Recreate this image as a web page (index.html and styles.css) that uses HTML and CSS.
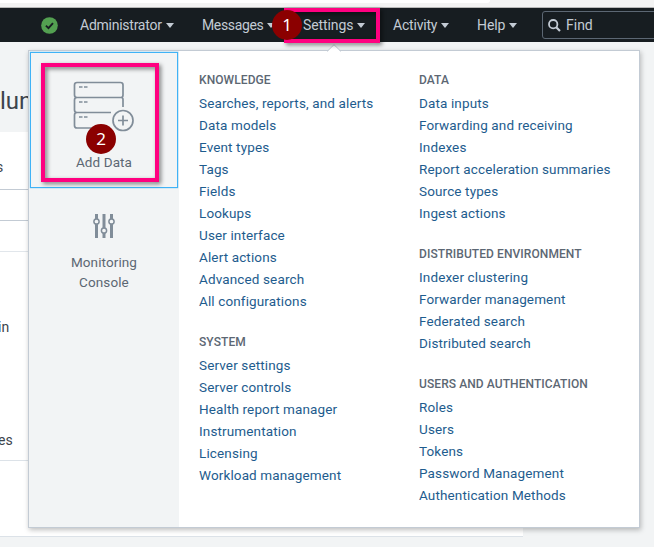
FILE: index.html
```
<!DOCTYPE html>
<html lang="en">
<head>
<meta charset="utf-8">
<title>Settings</title>
<link rel="stylesheet" href="styles.css">
</head>
<body>
<div class="browser-strip"><div class="browser-tab"></div></div>
<nav class="topbar">
  <svg class="health" viewBox="0 0 18 18"><circle cx="9" cy="9" r="8.8" fill="#53a051"/><path d="M5.2 9.2l2.7 2.6 4.8-5.3" fill="none" stroke="#171d21" stroke-width="2"/></svg>
  <a class="nav nav-admin"><span>Administrator</span><i class="caret"></i></a>
  <a class="nav nav-messages"><span>Messages</span><i class="caret"></i></a>
  <a class="nav nav-settings"><span>Settings</span><i class="caret"></i></a>
  <a class="nav nav-activity"><span>Activity</span><i class="caret"></i></a>
  <a class="nav nav-help"><span>Help</span><i class="caret"></i></a>
  <div class="find">
    <svg class="find-icon" viewBox="0 0 13 13"><circle cx="5.2" cy="5.2" r="4.2" fill="none" stroke="#c3cbd4" stroke-width="1.8"/><path d="M8.2 8.2L12 12" stroke="#c3cbd4" stroke-width="2.2"/></svg>
    <span>Find</span>
  </div>
</nav>
<main class="page">
  <h1 class="page-title">lun</h1>
  <section class="content">
    <div class="row row-label">s</div>
    <div class="row row-field"></div>
    <div class="row row-blank"></div>
    <div class="row row-list"><span>in</span><span>es</span></div>
  </section>
</main>

<div class="menu">
  <svg class="notch" viewBox="0 0 14 8"><path d="M0 8L7 1l7 7z" fill="#fff"/><path d="M0 7.5L7 .7l7 6.8" fill="none" stroke="#c3cbd4" stroke-width="1"/></svg>
  <aside class="side">
    <a class="tile tile-active">
      <svg class="add-icon" viewBox="0 0 62 52" fill="none" stroke="#818d99" stroke-width="1.7">
        <path d="M50 26V18.500Q50 16.500 48 16.500Q50 16.500 50 14V4Q50 1.500 47.500 1.500H4Q1.500 1.500 1.500 4V14Q1.500 16.500 4 16.500H48M4 16.500Q1.500 16.500 1.500 19V29Q1.500 31.500 4 31.500H38M4 31.500Q1.500 31.500 1.500 34V44.500Q1.500 47 4 47H36"/>
        <path d="M6 6h3.500m1.500 0h3.500M6 21h3.500m1.500 0h3.500M6 36h3.500m1.500 0h3.500" stroke-width="1.400"/>
        <circle cx="50" cy="39.500" r="10"/>
        <path d="M50 34.500v10M45 39.500h10"/>
      </svg>
      <span>Add Data</span>
    </a>
    <a class="tile tile-console">
      <svg class="console-icon" viewBox="0 0 22 24" fill="none" stroke="#818d99"><path d="M3.500 0v5m0 5v14M11 0v14m0 5v5M18.500 0v5m0 5v14" stroke-width="3"/><g stroke-width="1.500"><circle cx="3.500" cy="7.500" r="2.600"/><circle cx="11" cy="16.500" r="2.600"/><circle cx="18.500" cy="7.500" r="2.600"/></g></svg>
      <span>Monitoring<br>Console</span>
    </a>
  </aside>
  <div class="columns">
    <div class="column">
      <h2>KNOWLEDGE</h2>
      <ul>
        <li>Searches, reports, and alerts</li>
        <li>Data models</li>
        <li>Event types</li>
        <li>Tags</li>
        <li>Fields</li>
        <li>Lookups</li>
        <li>User interface</li>
        <li>Alert actions</li>
        <li>Advanced search</li>
        <li>All configurations</li>
      </ul>
      <h2>SYSTEM</h2>
      <ul>
        <li>Server settings</li>
        <li>Server controls</li>
        <li>Health report manager</li>
        <li>Instrumentation</li>
        <li>Licensing</li>
        <li>Workload management</li>
      </ul>
    </div>
    <div class="column">
      <h2>DATA</h2>
      <ul>
        <li>Data inputs</li>
        <li>Forwarding and receiving</li>
        <li>Indexes</li>
        <li>Report acceleration summaries</li>
        <li>Source types</li>
        <li>Ingest actions</li>
      </ul>
      <h2>DISTRIBUTED ENVIRONMENT</h2>
      <ul>
        <li>Indexer clustering</li>
        <li>Forwarder management</li>
        <li>Federated search</li>
        <li>Distributed search</li>
      </ul>
      <h2>USERS AND AUTHENTICATION</h2>
      <ul>
        <li>Roles</li>
        <li>Users</li>
        <li>Tokens</li>
        <li>Password Management</li>
        <li>Authentication Methods</li>
      </ul>
    </div>
  </div>
</div>

<div class="mark mark-settings"></div>
<div class="badge badge-one">1</div>
<div class="mark mark-add"></div>
<div class="badge badge-two">2</div>
</body>
</html>
```
FILE: styles.css
```
* { box-sizing: border-box; }
body {
  margin: 0;
  width: 654px;
  height: 547px;
  overflow: hidden;
  position: relative;
  background: #f2f4f5;
  font: 14px/20px Roboto, "Liberation Sans", sans-serif;
  color: #3c444d;
}
.browser-strip { height: 8px; background: #f3f3f3; border-bottom: 1px solid #b8b8b8; }
.browser-tab { width: 490px; height: 3px; background: #fff; border-radius: 0 0 3px 0; }

.topbar {
  display: flex;
  align-items: center;
  height: 34px;
  padding-left: 41px;
  background: #171d21;
  color: #c3cbd4;
  overflow: hidden;
}
.health { width: 17px; height: 17px; margin-right: 22px; flex: none; }
.nav { display: flex; align-items: center; gap: 4px; flex: none; letter-spacing: -.1px; }
.nav-admin { width: 122px; letter-spacing: -.25px; }
.nav-messages { width: 101px; letter-spacing: -.35px; }
.nav-settings { width: 90px; }
.nav-activity { width: 84px; letter-spacing: -.2px; }
.nav-help { width: 65px; }
.caret { border: 4.5px solid transparent; border-top: 5px solid #c3cbd4; border-bottom: 0; }
.find {
  display: flex;
  align-items: center;
  gap: 5px;
  flex: none;
  width: 130px;
  height: 28px;
  padding-left: 5px;
  border: 1px solid #5c6773;
  border-radius: 3px;
}
.find-icon { width: 13px; height: 13px; }

.page-title { margin: 0; height: 90px; padding-top: 43px; font-size: 24px; line-height: 32px; font-weight: 400; }
.content { width: 523px; height: 405px; background: #fff; border-bottom: 1px solid #dce2e8; }
.row-label { height: 58px; padding-top: 25px; text-indent: -4px; border-bottom: 1px solid #c3cbd4; }
.row-field { height: 31px; border-bottom: 1px solid #c3cbd4; }
.row-blank { height: 31px; border-bottom: 1px solid #e1e6eb; }
.row-list { display: flex; flex-direction: column; gap: 93px; height: 209px; padding-top: 65px; text-indent: -2px; border-bottom: 1px solid #dce2e8; }

.menu {
  position: absolute;
  left: 28px;
  top: 50px;
  width: 612px;
  height: 478px;
  display: flex;
  background: #fff;
  border: 1px solid #c3cbd4;
  box-shadow: 1px 2px 5px rgba(0, 0, 0, .25);
}
.notch { position: absolute; left: 298px; top: -7px; width: 14px; height: 8px; }
.side { width: 150px; background: #f2f4f5; color: #5c6773; text-align: center; }
.tile { display: flex; flex-direction: column; align-items: center; font-size: 13.5px; letter-spacing: .1px; }
.tile-active { width: 148px; height: 136px; margin: 1px 0 0 1px; padding-top: 28px; border: 1px solid #3fb2f6; box-shadow: 0 0 1px #3fb2f6; }
.add-icon { width: 62px; height: 52px; margin-bottom: 19px; }
.tile-console { padding-top: 26px; }
.console-icon { width: 22px; height: 24px; margin-bottom: 14px; }

.columns { display: flex; padding: 19px 0 0 20px; }
.column { width: 220px; }
.column h2 { margin: 0 0 2px; font-size: 12px; line-height: 20px; font-weight: 500; letter-spacing: .08px; color: #5c6773; }
.column ul { margin: 0 0 20px; padding: 0; list-style: none; }
.column li { font-size: 13.5px; line-height: 22px; letter-spacing: .13px; color: #1e5c8e; white-space: nowrap; }

.mark { position: absolute; border: 4px solid #ff0080; filter: drop-shadow(2px 2px 2px rgba(0, 0, 0, .5)); }
.mark-settings { left: 284px; top: 8px; width: 96px; height: 35px; }
.mark-add { left: 41px; top: 63px; width: 118px; height: 119px; }
.badge {
  position: absolute;
  width: 30px;
  height: 30px;
  border-radius: 50%;
  background: #8b0000;
  color: #fff;
  font: 17px/29px "Noto Sans", sans-serif;
  text-align: center;
}
.badge-one { left: 272px; top: 10px; }
.badge-two { left: 86px; top: 124px; }
```
